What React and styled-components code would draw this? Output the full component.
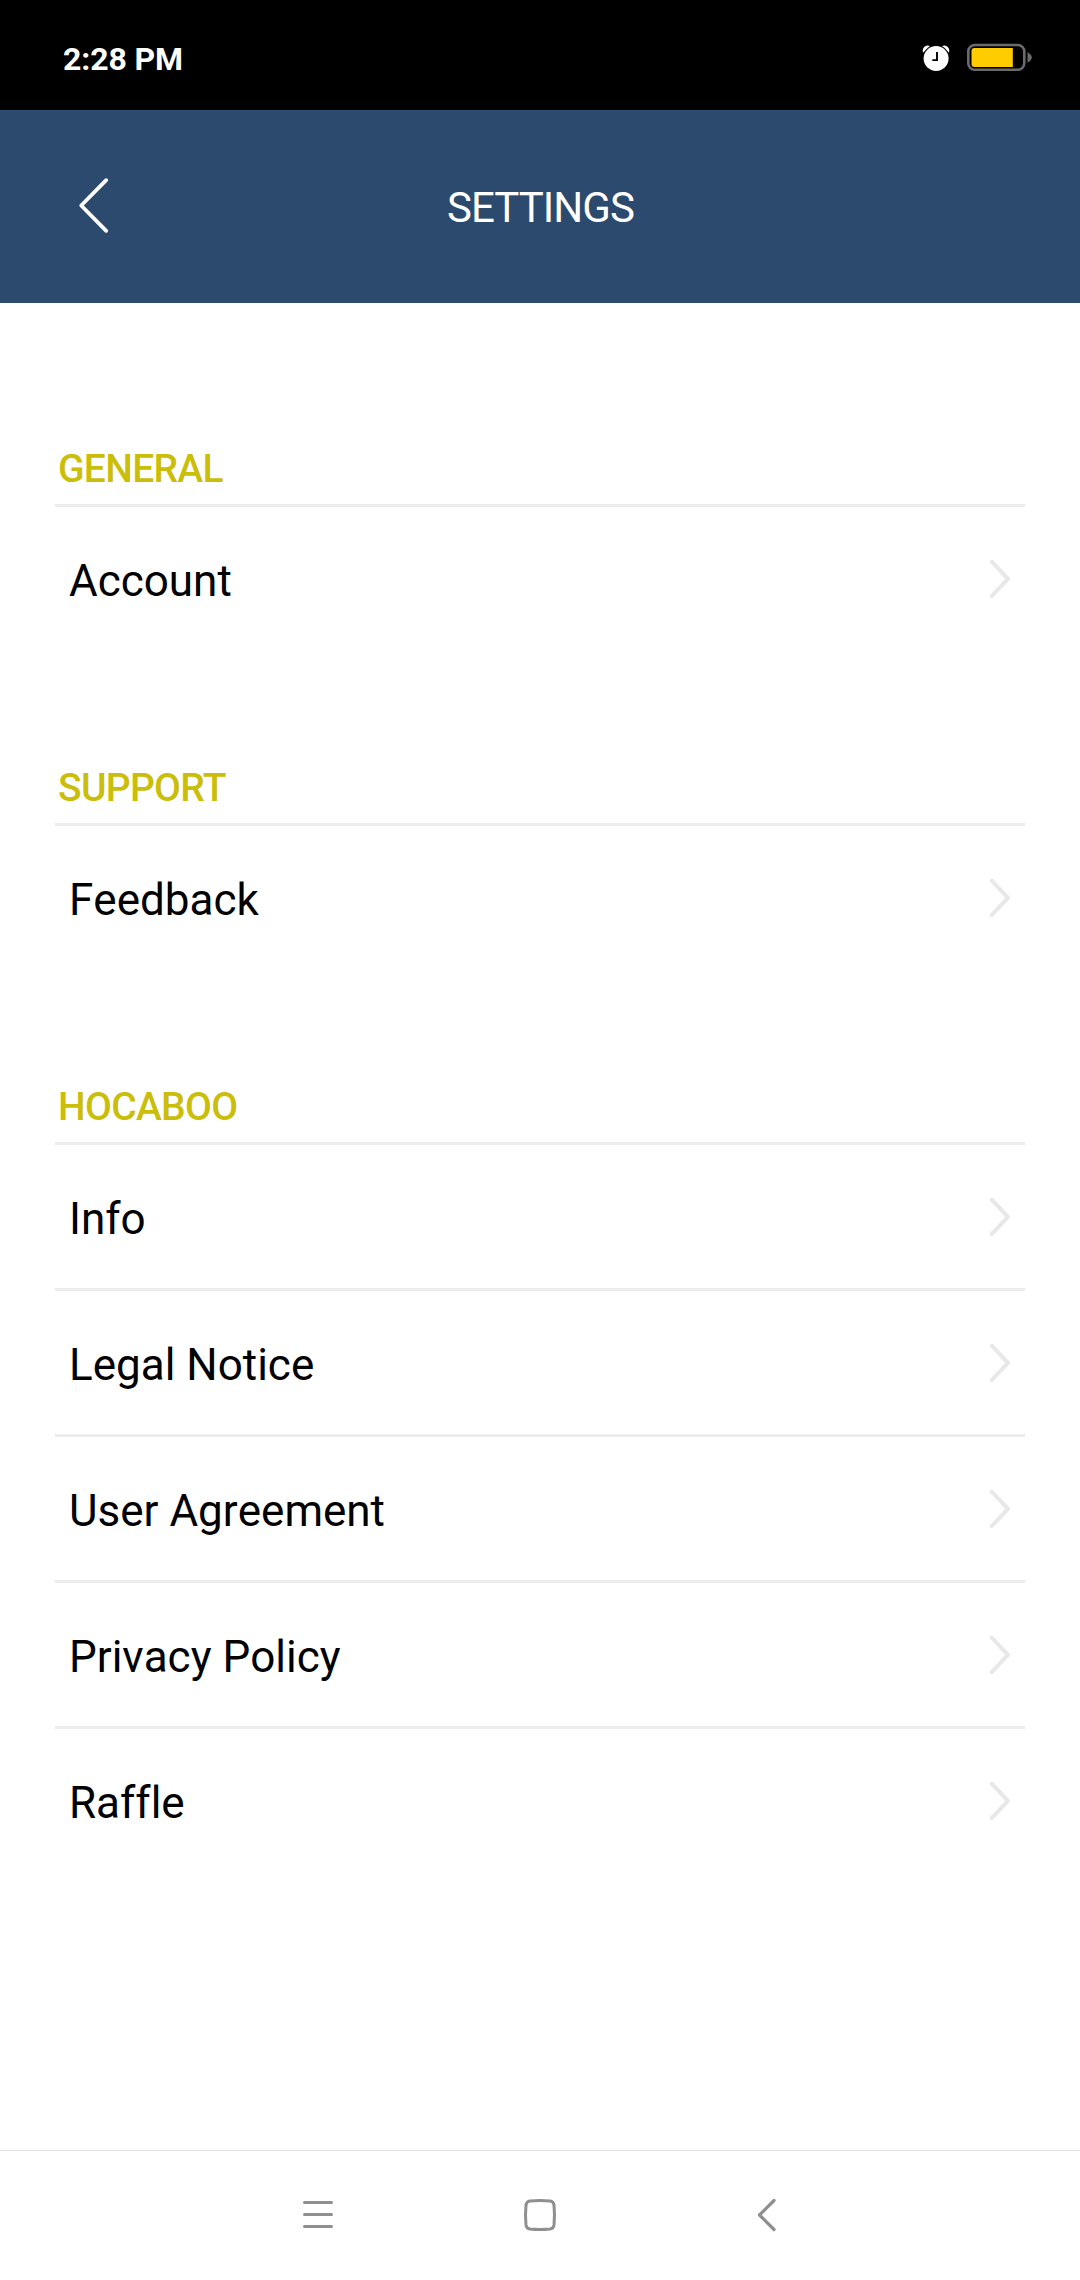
import React from "react";
import styled, { createGlobalStyle } from "styled-components";

const GlobalStyle = createGlobalStyle`
  *, *::before, *::after { box-sizing: border-box; }
  html, body { margin: 0; padding: 0; background: #ffffff; }
  body { font-family: Roboto, "Noto Sans", sans-serif; font-kerning: normal; }
`;

const Screen = styled.div`
  display: flex;
  flex-direction: column;
  width: 1080px;
  height: 2280px;
  overflow: hidden;
  background: #ffffff;
  color: #000000;
`;

const StatusBar = styled.div`
  display: flex;
  align-items: center;
  justify-content: space-between;
  flex: none;
  height: 110px;
  padding: 5px 48px 0 63px;
  background: #000000;
`;

const Clock = styled.span`
  padding-top: 3px;
  color: #ffffff;
  font-size: 32px;
  font-weight: 700;
  line-height: 40px;
  letter-spacing: -0.1px;
`;

const StatusIcons = styled.div`
  display: flex;
  align-items: center;
  gap: 16px;
  height: 32px;

  svg { display: block; }
`;

const Header = styled.header`
  display: grid;
  grid-template-columns: 180px 1fr 180px;
  align-items: center;
  flex: none;
  height: 193px;
  background: #2c4a6e;
`;

const BackButton = styled.button`
  display: flex;
  align-items: center;
  height: 100%;
  margin: 0;
  padding: 0 0 3px 74px;
  border: 0;
  background: none;
`;

const Title = styled.h1`
  margin: 0;
  padding: 2px 0 0 1px;
  color: #ffffff;
  font-size: 42px;
  font-weight: 400;
  line-height: 50px;
  letter-spacing: -0.95px;
  text-align: center;
`;

const Content = styled.main`
  display: flex;
  flex-direction: column;
  flex: 1;
  padding: 28px 55px 0;
`;

const Section = styled.section`
  display: flex;
  flex-direction: column;
`;

const SectionTitle = styled.h2`
  display: flex;
  align-items: flex-end;
  height: 176px;
  margin: 0;
  padding: 0 3px 11px;
  border-bottom: 3px solid #ededed;
  color: #cbbe0b;
  font-size: 39px;
  font-weight: 500;
  line-height: 48px;
  letter-spacing: -0.7px;
`;

const Row = styled.a`
  display: flex;
  align-items: center;
  justify-content: space-between;
  height: ${({ $last }) => ($last ? 143 : 146)}px;
  padding: 0 14px;
  border-bottom: ${({ $last }) => ($last ? "0" : "3px solid #ededed")};
`;

const RowLabel = styled.span`
  padding-top: 4px;
  font-size: 44px;
  line-height: 52px;
  font-kerning: none;
  font-variant-ligatures: none;
`;

const Glyph = styled.svg`
  display: block;
  flex: none;
  fill: none;
  stroke: ${({ $color }) => $color};
  stroke-width: ${({ $weight }) => $weight};
  stroke-linecap: round;
  stroke-linejoin: round;
`;

const NavBar = styled.nav`
  display: grid;
  grid-template-columns: 228px 216px 236px;
  flex: none;
  height: 130px;
  padding: 0 0 2px 204px;
  border-top: 1px solid #e0e0e0;
  background: #ffffff;
`;

const NavButton = styled.button`
  display: flex;
  align-items: center;
  justify-content: center;
  margin: 0;
  padding: 0;
  border: 0;
  background: none;
`;

const sections = [
  { title: "GENERAL", items: ["Account"] },
  { title: "SUPPORT", items: ["Feedback"] },
  { title: "HOCABOO", items: ["Info", "Legal Notice", "User Agreement", "Privacy Policy", "Raffle"] },
];

function AlarmIcon() {
  return (
    <svg width="30" height="32" viewBox="0 0 30 32">
      <path d="M2 10.8Q0.8 6.5 4.2 4.2Q6.8 2.6 9 4.3ZM28 10.8Q29.2 6.5 25.8 4.2Q23.2 2.6 21 4.3Z" fill="#fff" />
      <circle cx="15.100" cy="16.500" r="13.400" fill="#000" />
      <circle cx="15.100" cy="16.500" r="12.500" fill="#fff" />
      <path d="M16 10v8.100h-4.700" fill="none" stroke="#000" strokeWidth="1.900" />
    </svg>
  );
}

function BatteryIcon() {
  return (
    <svg width="65" height="32" viewBox="0 0 65 32">
      <rect x="1.3" y="3" width="56" height="24.8" rx="6.5" fill="none" stroke="#6b6b6b" strokeWidth="2.6" />
      <path d="M7.5 6H45.8V25H7.5Q4.500 25 4.500 22V9Q4.500 6 7.500 6Z" fill="#ffcc00" />
      <path d="M60.500 10Q64.800 12.800 64.800 15.400T60.500 20.800Z" fill="#6b6b6b" />
    </svg>
  );
}

function Chevron() {
  return (
    <Glyph $color="#e8e8e8" $weight="4" width="24" height="44" viewBox="0 0 24 44">
      <path d="M4.7 4.7L21 21.900L4.7 39.200" />
    </Glyph>
  );
}

export default function App() {
  return (
    <Screen>
      <GlobalStyle />
      <StatusBar>
        <Clock>2:28 PM</Clock>
        <StatusIcons>
          <AlarmIcon />
          <BatteryIcon />
        </StatusIcons>
      </StatusBar>
      <Header>
        <BackButton aria-label="Back">
          <Glyph $color="#ffffff" $weight="3.8" width="36" height="60" viewBox="0 0 36 60">
            <path d="M32.200 5.200L7.200 30.500L32.200 55.800" />
          </Glyph>
        </BackButton>
        <Title>SETTINGS</Title>
      </Header>
      <Content>
        {sections.map(({ title, items }) => (
          <Section key={title}>
            <SectionTitle>{title}</SectionTitle>
            {items.map((item, index) => (
              <Row key={item} $last={index === items.length - 1}>
                <RowLabel>{item}</RowLabel>
                <Chevron />
              </Row>
            ))}
          </Section>
        ))}
      </Content>
      <NavBar>
        <NavButton aria-label="Menu">
          <Glyph $color="#8f8f8f" $weight="3" width="36" height="36" viewBox="0 0 36 36">
            <path d="M4.5 5.5H31.5M4.5 17.6H31.5M4.5 29.6H31.5" />
          </Glyph>
        </NavButton>
        <NavButton aria-label="Home">
          <Glyph $color="#8f8f8f" $weight="3" width="36" height="36" viewBox="0 0 36 36">
            <path d="M8 4Q18 3 28 4Q31.5 4.5 32 8Q33 18 32 28Q31.5 31.5 28 32Q18 33 8 32Q4.5 31.5 4 28Q3 18 4 8Q4.5 4.5 8 4Z" />
          </Glyph>
        </NavButton>
        <NavButton aria-label="Previous">
          <Glyph $color="#8f8f8f" $weight="3.2" width="36" height="36" viewBox="0 0 36 36">
            <path d="M26 3.5L11.500 18L26 32.5" />
          </Glyph>
        </NavButton>
      </NavBar>
    </Screen>
  );
}
